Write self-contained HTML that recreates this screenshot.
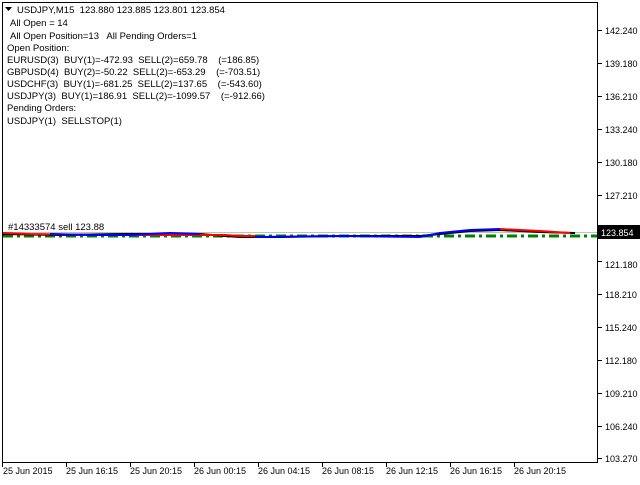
<!DOCTYPE html><html><head><style>body{margin:0;width:640px;height:480px;background:#fff;overflow:hidden}
svg text{font-family:"Liberation Sans",sans-serif;font-size:9.5px}
.ax text{font-size:9px}
</style></head><body>
<svg width="640" height="480" xmlns="http://www.w3.org/2000/svg">
<rect x="2.5" y="2.5" width="595" height="460" fill="none" stroke="#000"/>
<g class="ax" fill="#000">
<text x="605" y="34">142.240</text>
<text x="605" y="67">139.180</text>
<text x="605" y="100">136.210</text>
<text x="605" y="133">133.240</text>
<text x="605" y="166">130.180</text>
<text x="605" y="199">127.210</text>
<text x="605" y="232">124.240</text>
<text x="605" y="268">121.180</text>
<text x="605" y="298">118.210</text>
<text x="605" y="331">115.240</text>
<text x="605" y="364">112.180</text>
<text x="605" y="397">109.210</text>
<text x="605" y="430">106.240</text>
<text x="605" y="462">103.270</text>
<text x="3" y="474">25 Jun 2015</text><text x="66" y="474">25 Jun 16:15</text><text x="130" y="474">25 Jun 20:15</text><text x="194" y="474">26 Jun 00:15</text><text x="258" y="474">26 Jun 04:15</text><text x="322" y="474">26 Jun 08:15</text><text x="386" y="474">26 Jun 12:15</text><text x="450" y="474">26 Jun 16:15</text><text x="514" y="474">26 Jun 20:15</text>
</g>
<g stroke="#000"><line x1="598" x2="602" y1="30.5" y2="30.5"/><line x1="598" x2="602" y1="63.5" y2="63.5"/><line x1="598" x2="602" y1="96.5" y2="96.5"/><line x1="598" x2="602" y1="129.5" y2="129.5"/><line x1="598" x2="602" y1="162.5" y2="162.5"/><line x1="598" x2="602" y1="195.5" y2="195.5"/><line x1="598" x2="602" y1="261.5" y2="261.5"/><line x1="598" x2="602" y1="294.5" y2="294.5"/><line x1="598" x2="602" y1="327.5" y2="327.5"/><line x1="598" x2="602" y1="360.5" y2="360.5"/><line x1="598" x2="602" y1="393.5" y2="393.5"/><line x1="598" x2="602" y1="426.5" y2="426.5"/><line x1="598" x2="602" y1="458.5" y2="458.5"/>
<line x1="2.5" x2="2.5" y1="463" y2="467"/><line x1="66.5" x2="66.5" y1="463" y2="467"/><line x1="130.5" x2="130.5" y1="463" y2="467"/><line x1="194.5" x2="194.5" y1="463" y2="467"/><line x1="258.5" x2="258.5" y1="463" y2="467"/><line x1="322.5" x2="322.5" y1="463" y2="467"/><line x1="386.5" x2="386.5" y1="463" y2="467"/><line x1="450.5" x2="450.5" y1="463" y2="467"/><line x1="514.5" x2="514.5" y1="463" y2="467"/></g>
<line x1="3" x2="597" y1="232.5" y2="232.5" stroke="#c0c0c0"/>
<line x1="3" x2="597" y1="236" y2="236" stroke="#008000" stroke-width="3" stroke-dasharray="10,4,3,4"/>
<polyline fill="none" stroke="#000" stroke-width="2" points="3,234 60,235 120,234 200,234 225,236 240,237 280,237 340,236 420,236 440,234 470,231 500,230 540,232 575,233"/>
<polyline fill="none" stroke="#f00" stroke-width="2" points="3,233 30,234 100,235 180,235 225,235 240,236 255,236"/>
<polyline fill="none" stroke="#00f" stroke-width="2" points="50,234 90,235 130,235 170,233 200,234"/>
<polyline fill="none" stroke="#00f" stroke-width="2" points="255,237 340,236 420,237 440,233 470,230 500,229"/>
<polyline fill="none" stroke="#f00" stroke-width="2" points="500,229 540,231 570,233"/>
<text x="8" y="230" fill="#000">#14333574 sell 123.88</text>
<rect x="598" y="225" width="42" height="14" fill="#000"/><text x="601" y="236" fill="#fff" style="font-size:9px">123.854</text>
<g fill="#000"><path d="M5,7h7l-3.5,4z"/>
<text x="17" y="13" xml:space="preserve">USDJPY,M15  123.880 123.885 123.801 123.854</text>
<text x="10" y="26">All Open = 14</text>
<text x="10" y="39" xml:space="preserve">All Open Position=13   All Pending Orders=1</text>
<text x="7" y="51">Open Position:</text>
<text x="7" y="63" xml:space="preserve">EURUSD(3)  BUY(1)=-472.93  SELL(2)=659.78    (=186.85)</text>
<text x="7" y="75" xml:space="preserve">GBPUSD(4)  BUY(2)=-50.22  SELL(2)=-653.29    (=-703.51)</text>
<text x="7" y="87" xml:space="preserve">USDCHF(3)  BUY(1)=-681.25  SELL(2)=137.65    (=-543.60)</text>
<text x="7" y="99" xml:space="preserve">USDJPY(3)  BUY(1)=186.91  SELL(2)=-1099.57    (=-912.66)</text>
<text x="7" y="111">Pending Orders:</text>
<text x="7" y="124" xml:space="preserve">USDJPY(1)  SELLSTOP(1)</text></g>
</svg></body></html>
